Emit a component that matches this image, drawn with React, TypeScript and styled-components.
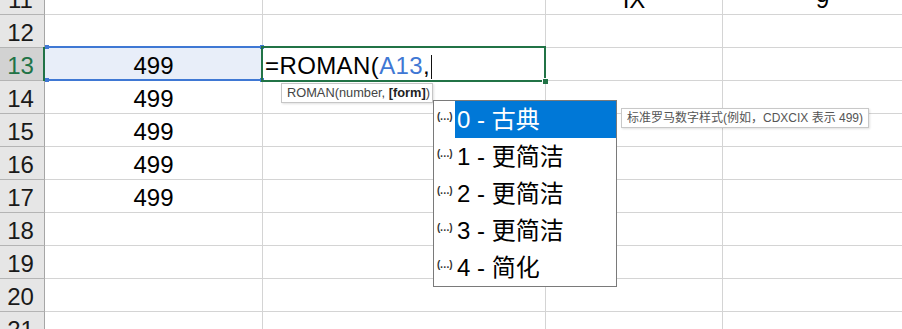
import React from "react";
import styled, { createGlobalStyle } from "styled-components";

const GlobalStyle = createGlobalStyle`
  html, body { margin: 0; padding: 0; background: #ffffff; }
  body { font-family: "Liberation Sans", "Noto Sans CJK SC", sans-serif; }
`;

const Viewport = styled.div`
  position: relative;
  width: 902px;
  height: 329px;
  overflow: hidden;
  background: #ffffff;
`;

const Sheet = styled.div`
  display: flex;
  flex-direction: column;
  margin-top: -18px;
`;

const Row = styled.div`
  display: flex;
  height: 33px;
  flex: none;
`;

const RowHeader = styled.div<{ $active?: boolean }>`
  width: 45px;
  flex: none;
  box-sizing: border-box;
  position: relative;
  border-right: 1px solid #a6a6a6;
  border-bottom: 1px solid #b4b4b4;
  background: ${(p) => (p.$active ? "#d2d2d2" : "#e6e6e6")};
  color: ${(p) => (p.$active ? "#217346" : "#1a1a1a")};
  font-size: 24px;
  display: flex;
  align-items: flex-end;
  justify-content: center;
  padding-right: 3px;
  &::after {
    content: "";
    display: ${(p) => (p.$active ? "block" : "none")};
    position: absolute;
    top: -1px;
    bottom: -1px;
    right: -1px;
    width: 2px;
    background: #217346;
  }
`;

const Cell = styled.div<{ $w: number; $align?: "left" | "center" }>`
  width: ${(p) => p.$w}px;
  flex: none;
  box-sizing: border-box;
  position: relative;
  border-right: 1px solid #d4d4d4;
  border-bottom: 1px solid #d4d4d4;
  display: flex;
  align-items: flex-end;
  justify-content: ${(p) => (p.$align === "left" ? "flex-start" : "center")};
  padding-left: ${(p) => (p.$align === "left" ? "2px" : "0")};
  font-size: 24px;
  color: #000000;
  white-space: nowrap;
`;

const RefCell = styled(Cell)`
  background: #e8eef9;
  &::before {
    content: "";
    position: absolute;
    top: -2px;
    left: 0;
    right: -1px;
    bottom: -1px;
    border-top: 2px solid #3f78d4;
    border-bottom: 2px solid #3f78d4;
    pointer-events: none;
  }
`;

const Corner = styled.span<{ $pos: "tl" | "tr" | "bl" | "br" }>`
  position: absolute;
  width: 4px;
  height: 4px;
  background: #3f78d4;
  z-index: 2;
  ${(p) => (p.$pos[0] === "t" ? "top: -3px;" : "bottom: -2px;")}
  ${(p) => (p.$pos[1] === "l" ? "left: 0;" : "right: -2px;")}
`;

const EditCell = styled(Cell)`
  z-index: 3;
  &::before {
    content: "";
    position: absolute;
    top: -2px;
    left: -2px;
    right: -1px;
    bottom: -2px;
    border: 2px solid #217346;
    pointer-events: none;
  }
`;

const FormulaText = styled.span`
  letter-spacing: 0.4px;
`;

const FillHandle = styled.span`
  position: absolute;
  right: -3px;
  bottom: -4px;
  width: 5px;
  height: 5px;
  background: #217346;
  border-left: 1px solid #ffffff;
  border-top: 1px solid #ffffff;
`;

const RefText = styled.span`
  color: #3f78d4;
`;

const Caret = styled.span`
  display: inline-block;
  width: 1px;
  height: 24px;
  background: #111111;
  margin-left: 1px;
  vertical-align: -5px;
`;

const ArgTip = styled.div`
  position: absolute;
  left: 281px;
  top: 83px;
  width: 152px;
  height: 20px;
  box-sizing: border-box;
  background: #ffffff;
  border: 1px solid #c6c6c6;
  box-shadow: 1px 1px 2px rgba(0, 0, 0, 0.12);
  color: #444444;
  font-size: 12.8px;
  line-height: 18px;
  padding-left: 5px;
  white-space: nowrap;
  z-index: 5;
  b {
    color: #222222;
  }
`;

const Dropdown = styled.div`
  position: absolute;
  left: 433px;
  top: 100px;
  width: 184px;
  box-sizing: border-box;
  background: #ffffff;
  border: 1px solid #7a7a7a;
  display: flex;
  flex-direction: column;
  z-index: 6;
`;

const Item = styled.div`
  display: flex;
  height: 37px;
  flex: none;
`;

const ItemIcon = styled.div`
  width: 21px;
  flex: none;
  box-sizing: border-box;
  padding: 10px 0 0 3px;
  font-size: 10px;
  line-height: 12px;
  font-weight: bold;
  color: #333333;
  letter-spacing: -0.5px;
  white-space: nowrap;
`;

const ItemText = styled.div<{ $selected?: boolean }>`
  flex: 1;
  background: ${(p) => (p.$selected ? "#0078d7" : "transparent")};
  color: ${(p) => (p.$selected ? "#ffffff" : "#000000")};
  font-size: 24px;
  line-height: 37px;
  padding-left: 2px;
  white-space: nowrap;
  overflow: hidden;
  height: 37px;
`;

const DescTip = styled.div`
  position: absolute;
  left: 621px;
  top: 108px;
  width: 248px;
  height: 20px;
  box-sizing: border-box;
  background: #ffffff;
  border: 1px solid #c8c8c8;
  box-shadow: 1px 1px 2px rgba(0, 0, 0, 0.12);
  color: #555555;
  font-size: 12px;
  line-height: 18px;
  padding-left: 5px;
  white-space: nowrap;
  z-index: 6;
`;

const widths = [218, 283, 177, 200];

type RowData = { n: number; cells: string[] };

const rows: RowData[] = [
  { n: 11, cells: ["", "", "IX", "9"] },
  { n: 12, cells: ["", "", "", ""] },
  { n: 13, cells: ["499", "", "", ""] },
  { n: 14, cells: ["499", "", "", ""] },
  { n: 15, cells: ["499", "", "", ""] },
  { n: 16, cells: ["499", "", "", ""] },
  { n: 17, cells: ["499", "", "", ""] },
  { n: 18, cells: ["", "", "", ""] },
  { n: 19, cells: ["", "", "", ""] },
  { n: 20, cells: ["", "", "", ""] },
  { n: 21, cells: ["", "", "", ""] },
];

const options = ["0 - 古典", "1 - 更简洁", "2 - 更简洁", "3 - 更简洁", "4 - 简化"];

export default function App() {
  return (
    <Viewport>
      <GlobalStyle />
      <Sheet>
        {rows.map((r) => {
          const active = r.n === 13;
          return (
            <Row key={r.n}>
              <RowHeader $active={active}>{r.n}</RowHeader>
              {active ? (
                <>
                  <RefCell $w={widths[0]}>
                    {r.cells[0]}
                    <Corner $pos="tl" />
                    <Corner $pos="tr" />
                    <Corner $pos="bl" />
                    <Corner $pos="br" />
                  </RefCell>
                  <EditCell $w={widths[1]} $align="left">
                    <FormulaText>
                      =ROMAN(<RefText>A13</RefText>,
                      <Caret />
                    </FormulaText>
                    <FillHandle />
                  </EditCell>
                  <Cell $w={widths[2]} />
                  <Cell $w={widths[3]} />
                </>
              ) : (
                r.cells.map((c, i) => (
                  <Cell key={i} $w={widths[i]}>
                    {c}
                  </Cell>
                ))
              )}
            </Row>
          );
        })}
      </Sheet>
      <ArgTip>
        ROMAN(number, <b>[form]</b>)
      </ArgTip>
      <Dropdown>
        {options.map((o, i) => (
          <Item key={o}>
            <ItemIcon>(…)</ItemIcon>
            <ItemText $selected={i === 0}>{o}</ItemText>
          </Item>
        ))}
      </Dropdown>
      <DescTip>标准罗马数字样式(例如，CDXCIX 表示 499)</DescTip>
    </Viewport>
  );
}
